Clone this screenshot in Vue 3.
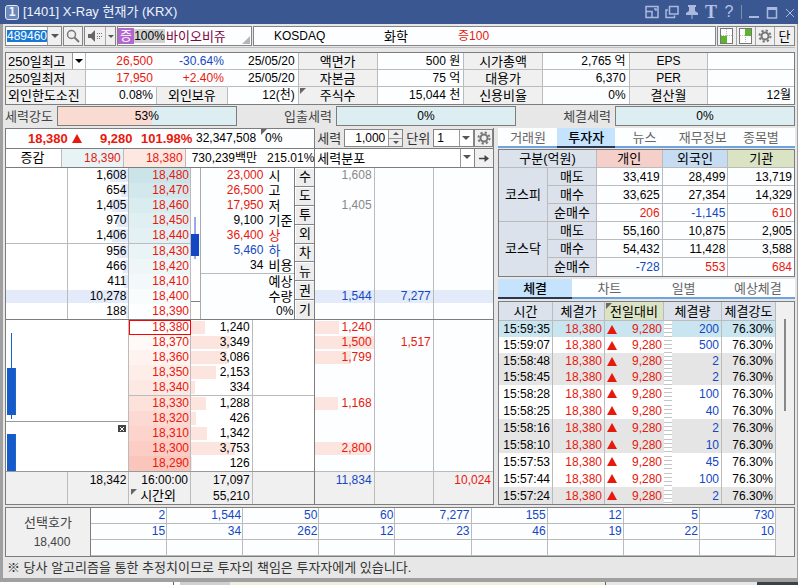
<script setup>
import { ref } from 'vue'

const code = ref('489460')
const forceQty = ref('1,000')
const unit = ref('1')
const mode = ref('세력분포')
const infoTab = ref('투자자')
const dealTab = ref('체결')

const gauges = [
  { label: '세력강도', value: '53%', split: true },
  { label: '입출세력', value: '0%' },
  { label: '체결세력', value: '0%' },
]

const asks = [
  { qty: '1,608', price: '18,480', bg: '#cbe4ea', f1: '1,608' },
  { qty: '654', price: '18,470', bg: '#d2e8ec' },
  { qty: '1,405', price: '18,460', bg: '#d9ecf0', f1: '1,405' },
  { qty: '970', price: '18,450', bg: '#dfeff2' },
  { qty: '1,406', price: '18,440', bg: '#e4f1f4' },
  { qty: '956', price: '18,430', bg: '#e9f4f6' },
  { qty: '466', price: '18,420', bg: '#eef6f8' },
  { qty: '411', price: '18,410', bg: '#f3f9fa' },
  { qty: '10,278', price: '18,400', bg: '#f9fcfd', f1: '1,544', f2: '7,277', picked: true },
  { qty: '188', price: '18,390', bg: '#fdfeff' },
]
const bids = [
  { price: '18,380', qty: '1,240', bg: '#ffffff', f1: '1,240', w: 41, current: true },
  { price: '18,370', qty: '3,349', bg: '#fffaf8', f1: '1,500', f2: '1,517', w: 100 },
  { price: '18,360', qty: '3,086', bg: '#fff3f0', f1: '1,799', w: 61 },
  { price: '18,350', qty: '2,153', bg: '#feeeea', w: 0 },
  { price: '18,340', qty: '334', bg: '#fde9e4', w: 0 },
  { price: '18,330', qty: '1,288', bg: '#fde1db', f1: '1,168', w: 39 },
  { price: '18,320', qty: '426', bg: '#fcdad3', w: 0 },
  { price: '18,310', qty: '1,342', bg: '#fcd4cc', w: 0 },
  { price: '18,300', qty: '3,753', bg: '#fbcdc4', f1: '2,800', w: 95 },
  { price: '18,290', qty: '126', bg: '#fac6bc', w: 0 },
]
const share = (qty) => Math.min(100, Number(qty.replace(',', '')) / 52)
const askShare = (row) => (row.picked ? 0 : share(row.qty))

const stats = [
  ['23,000', '시', 'up'],
  ['26,500', '고', 'up'],
  ['17,950', '저', 'up'],
  ['9,100', '기준', ''],
  ['36,400', '상', 'up same'],
  ['5,460', '하', 'down same'],
  ['34', '비용', ''],
  ['', '예상', ''],
  ['', '수량', ''],
]
const sideKeys = ['수', '도', '투', '외', '차', '뉴', '권', '기']

const infoTabs = ['거래원', '투자자', '뉴스', '재무정보', '종목별']
const dealTabs = ['체결', '차트', '일별', '예상체결']

const investors = [
  { market: '코스피', side: '매도', v: ['33,419', '28,499', '13,719'] },
  { side: '매수', v: ['33,625', '27,354', '14,329'] },
  { side: '순매수', v: ['206', '-1,145', '610'], net: true },
  { market: '코스닥', side: '매도', v: ['55,160', '10,875', '2,905'] },
  { side: '매수', v: ['54,432', '11,428', '3,588'] },
  { side: '순매수', v: ['-728', '553', '684'], net: true },
]
const tone = (v) => (v.startsWith('-') ? 'down' : 'up')

const deals = [
  ['15:59:35', '200', 'new'],
  ['15:59:07', '500', ''],
  ['15:58:48', '2', 'alt'],
  ['15:58:45', '2', 'alt'],
  ['15:58:28', '100', 'tall'],
  ['15:58:25', '40', 'tall'],
  ['15:58:16', '2', 'alt tall'],
  ['15:58:10', '10', 'alt tall'],
  ['15:57:53', '45', 'tall'],
  ['15:57:44', '100', 'tall'],
  ['15:57:24', '2', 'alt tall'],
]
const picks = [
  ['2', '1,544', '50', '60', '7,277', '155', '12', '5', '730'],
  ['15', '34', '262', '12', '23', '46', '19', '22', '10'],
  ['', '', '', '', '', '', '', '', ''],
]
</script>

<template>
  <div class="window">
    <header class="titlebar">
      <span class="badge">1</span>
      <h1>[1401] X-Ray 현재가 (KRX)</h1>
      <div class="win-tools">
        <button type="button" aria-label="크기"><svg width="14" height="14" viewBox="0 0 14 14"><path d="M1 1.5H13V12.5H1ZM1 6.5H7V12.5M9 4H11V6" /></svg></button>
        <button type="button" aria-label="복제"><svg width="14" height="14" viewBox="0 0 14 14"><path d="M4.500 1.500H13V9H4.500ZM3 5H1V12.500H9.500V10.500" /></svg></button>
        <button type="button" aria-label="고정"><svg width="14" height="14" viewBox="0 0 14 14"><path class="fill" d="M3 0H11V2H10V6L13 8V10H1V8L4 6V2H3ZM6.500 10H7.500V14H6.500Z" /></svg></button>
        <button type="button" class="glyph serif">T</button>
        <button type="button" class="glyph">?</button>
        <i class="sep"></i>
        <button type="button" aria-label="최소화"><svg width="12" height="14" viewBox="0 0 12 14"><path class="fill" d="M1 11H11V13H1Z" /></svg></button>
        <button type="button" aria-label="최대화"><svg width="12" height="14" viewBox="0 0 12 14"><path d="M1.500 3H10.500V13H1.500Z" /><path class="fill" d="M1 2H11V5H1Z" /></svg></button>
        <button type="button" aria-label="닫기"><svg width="12" height="14" viewBox="0 0 12 14"><path class="hair" d="M2 4L10 12M10 4L2 12" /></svg></button>
      </div>
    </header>

    <main class="client">
      <div class="toolbar">
        <div class="combo code">
          <input v-model="code" aria-label="종목코드" />
          <button type="button" aria-label="종목 목록"><i class="caret"></i></button>
        </div>
        <button type="button" class="tool" aria-label="검색"><svg width="14" height="14" viewBox="0 0 14 14"><circle cx="5.500" cy="5.500" r="4" fill="none" stroke="#777" stroke-width="1.500" /><path d="M8.500 8.500L13 13" stroke="#777" stroke-width="2" /></svg></button>
        <div class="sound">
          <button type="button" class="tool" aria-label="음성"><svg width="16" height="14" viewBox="0 0 16 14"><path d="M1 5H4L8 1V13L4 9H1Z" fill="#666" /><path d="M10 4.500H15M10 7.500H15" stroke="#777" stroke-dasharray="1 1" /><path d="M10 9.500H13" stroke="#777" stroke-dasharray="1 1" /></svg></button>
          <button type="button" class="tool thin" aria-label="음성 설정"><i class="caret small"></i></button>
        </div>
        <div class="stock">
          <span class="purple">증</span><span class="rate">100%</span><span class="name">바이오비쥬</span>
          <i class="grip"></i>
        </div>
        <div class="market"><span class="m1">KOSDAQ</span><span class="m2">화학</span><span class="m3">증100</span></div>
        <div class="views">
          <button type="button" class="tool" aria-label="왼쪽 배치"><svg width="14" height="16" viewBox="0 0 14 16"><rect x=".5" y=".5" width="12" height="15" fill="#fff" stroke="#777" /><path d="M6.500 1V15M1 7.500H12" stroke="#bbb" stroke-dasharray="1 1" /><path d="M1 8H7V15H1Z" fill="#5cb52c" /></svg></button>
          <button type="button" class="tool" aria-label="오른쪽 배치"><svg width="14" height="16" viewBox="0 0 14 16"><rect x=".5" y=".5" width="12" height="15" fill="#fff" stroke="#777" /><path d="M6.500 1V15M1 7.500H12" stroke="#bbb" stroke-dasharray="1 1" /><path d="M6 1H12V8H6Z" fill="#5cb52c" /></svg></button>
          <button type="button" class="tool" aria-label="설정"><svg width="14" height="14" viewBox="0 0 14 14"><circle cx="7" cy="7" r="3.500" fill="none" stroke="#777" stroke-width="2" /><circle cx="7" cy="7" r="5.500" fill="none" stroke="#777" stroke-width="2" stroke-dasharray="2.200 2.120" /></svg></button>
          <button type="button" class="tool kr">단</button>
        </div>
      </div>

      <table class="grid info">
        <colgroup>
          <col class="i1" /><col class="i2" /><col class="i3" /><col class="i4" /><col class="i5" /><col class="i6" /><col class="i7" /><col class="i8" /><col class="i9" /><col class="i10" />
        </colgroup>
        <tbody>
          <tr>
            <th class="left pick">250일최고<button type="button" aria-label="기간 선택"><i class="caret dark"></i></button></th>
            <td class="up open">26,500</td><td class="down open">-30.64%</td><td>25/05/20</td>
            <th>액면가</th><td>500 원</td><th>시가총액</th><td>2,765 억</td><th class="en">EPS</th><td></td>
          </tr>
          <tr>
            <th class="left">250일최저</th>
            <td class="up open">17,950</td><td class="up open">+2.40%</td><td>25/05/20</td>
            <th>자본금</th><td>75 억</td><th>대용가</th><td>6,370</td><th class="en">PER</th><td></td>
          </tr>
          <tr>
            <th class="left">외인한도소진</th>
            <td>0.08%</td><th>외인보유</th><td>12(천)</td>
            <th class="marked">주식수</th><td>15,044 천</td><th>신용비율</th><td>0%</td><th>결산월</th><td>12월</td>
          </tr>
        </tbody>
      </table>

      <div class="gauges">
        <div v-for="g in gauges" :key="g.label" class="gauge">
          <span>{{ g.label }}</span><b :class="{ split: g.split }">{{ g.value }}</b>
        </div>
      </div>

      <div class="body">
        <section class="book">
          <div class="book-left">
            <div class="now">
              <b class="n1 up">18,380<i class="tri"></i></b><b class="n2 up">9,280</b><b class="n3 up">101.98%</b><span class="n4">32,347,508</span><span class="n5 marked">0%</span>
            </div>
            <div class="now2">
              <span class="kr center">증감</span><span class="up sky">18,390</span><span class="up rose">18,380</span>
              <span class="amount"><em>730,239백만</em><em>215.01%</em></span>
            </div>
            <div class="upper">
              <table class="ladder ask">
                <tbody>
                  <tr v-for="(r, i) in asks" :key="r.price" :class="{ rule: i === 4, picked: r.picked }">
                    <td></td>
                    <td class="qty"><i :style="{ width: askShare(r) + '%' }"></i><span>{{ r.qty }}</span></td>
                    <td class="up price" :style="{ background: r.bg }">{{ r.price }}</td>
                  </tr>
                </tbody>
              </table>
              <svg class="candle-up" viewBox="0 0 10 151" preserveAspectRatio="none"><path d="M4 49H5V91H4ZM0 66H9V88H0Z" fill="#1347c4" /><path d="M0 133H10V134H0Z" fill="#808080" /></svg>
              <div class="stats">
                <p v-for="s in stats" :key="s[1]" :class="[s[2], { line: s[1] === '예상' }]"><span>{{ s[0] }}</span><em>{{ s[1] }}</em></p>
                <p class="pct">0%</p>
              </div>
              <div class="side">
                <button v-for="k in sideKeys" :key="k" type="button">{{ k }}</button>
              </div>
            </div>
            <div class="lower">
              <div class="charts">
                <svg class="c1" viewBox="0 0 123 101" preserveAspectRatio="none"><path d="M5 13H6V99H5ZM1 48H10V95H1Z" fill="#155bc9" /></svg>
                <div class="c2">
                  <svg viewBox="0 0 123 49" preserveAspectRatio="none"><path d="M1 12H10V49H1Z" fill="#155bc9" /></svg>
                  <button type="button" aria-label="차트 닫기"><svg width="8" height="8" viewBox="0 0 8 8"><path d="M2 2L6 6M6 2L2 6" stroke="#fff" /></svg></button>
                </div>
              </div>
              <table class="ladder bid">
                <tbody>
                  <tr v-for="(r, i) in bids" :key="r.price" :class="{ rule: i === 4 }">
                    <td class="up price" :class="{ current: r.current }" :style="{ background: r.bg }">{{ r.price }}</td>
                    <td class="qty"><i :style="{ width: share(r.qty) + '%' }"></i><span>{{ r.qty }}</span></td>
                    <td></td>
                  </tr>
                </tbody>
              </table>
            </div>
            <div class="sum five">
              <span></span><span>18,342</span>
              <span>16:00:00<em class="kr marked">시간외</em></span>
              <span>17,097<em>55,210</em></span><span></span>
            </div>
          </div>

          <div class="book-right">
            <div class="ctl">
              <label for="force">세력</label>
              <div class="spin">
                <input id="force" v-model="forceQty" />
                <div><button type="button" aria-label="증가"><i class="caret small flip"></i></button><button type="button" aria-label="감소"><i class="caret small"></i></button></div>
              </div>
              <label for="unit">단위</label>
              <div class="pickbox unit"><select id="unit" v-model="unit"><option>1</option></select><i class="caret"></i></div>
              <button type="button" class="end" aria-label="설정"><svg width="14" height="14" viewBox="0 0 14 14"><circle cx="7" cy="7" r="3.500" fill="none" stroke="#777" stroke-width="2" /><circle cx="7" cy="7" r="5.500" fill="none" stroke="#777" stroke-width="2" stroke-dasharray="2.200 2.120" /></svg></button>
            </div>
            <div class="ctl second">
              <div class="pickbox"><select v-model="mode" aria-label="표시 항목"><option>세력분포</option></select><i class="caret"></i></div>
              <button type="button" class="end" aria-label="이동"><svg width="12" height="9" viewBox="0 0 12 9"><path d="M1 4.500H9" stroke="#444" stroke-width="1.500" /><path d="M6.500 1L11 4.500L6.500 8Z" fill="#444" /></svg></button>
            </div>
            <table class="ladder dist">
              <tbody>
                <tr v-for="(r, i) in asks" :key="r.price" :class="{ gap: i === 4, picked: r.picked }">
                  <td :class="r.picked ? 'down' : 'mute'">{{ r.f1 }}</td><td class="down">{{ r.f2 }}</td><td></td>
                </tr>
              </tbody>
            </table>
            <table class="ladder dist second">
              <tbody>
                <tr v-for="(r, i) in bids" :key="r.price" :class="{ gap: i === 4 }">
                  <td class="qty up"><i :style="{ width: r.w + '%' }"></i><span>{{ r.f1 }}</span></td><td class="up">{{ r.f2 }}</td><td></td>
                </tr>
              </tbody>
            </table>
            <div class="sum three"><span class="down">11,834</span><span></span><span class="up">10,024</span></div>
          </div>
        </section>

        <section class="panel">
          <nav class="tabs five-tabs">
            <button v-for="t in infoTabs" :key="t" type="button" :class="{ on: t === infoTab }" @click="infoTab = t">{{ t }}</button>
          </nav>
          <table class="grid inv">
            <colgroup><col class="v1" /><col class="v1" /><col /><col /><col /></colgroup>
            <thead>
              <tr><th colspan="2">구분(억원)</th><th class="p">개인</th><th class="f">외국인</th><th class="g">기관</th></tr>
            </thead>
            <tbody>
              <tr v-for="(r, i) in investors" :key="i">
                <th v-if="r.market" rowspan="3" :class="{ last: i === 3 }">{{ r.market }}</th>
                <th>{{ r.side }}</th>
                <td v-for="v in r.v" :key="v" :class="r.net ? tone(v) : ''">{{ v }}</td>
              </tr>
            </tbody>
          </table>
          <nav class="tabs four-tabs">
            <button v-for="t in dealTabs" :key="t" type="button" :class="{ on: t === dealTab }" @click="dealTab = t">{{ t }}</button>
          </nav>
          <div class="dealbox">
            <table class="deals">
              <colgroup><col class="d1" /><col class="d2" /><col class="d3" /><col class="d4" /><col class="d5" /><col class="d6" /></colgroup>
              <thead>
                <tr><th>시간</th><th>체결가</th><th class="g marked">전일대비</th><th colspan="2">체결량</th><th>체결강도</th></tr>
              </thead>
              <tbody>
                <tr v-for="d in deals" :key="d[0]" :class="d[2]">
                  <td>{{ d[0] }}</td><td class="up">18,380</td>
                  <td class="up diff"><div><i class="tri"></i>9,280</div></td>
                  <td class="hatch"></td><td class="down">{{ d[1] }}</td><td>76.30%</td>
                </tr>
              </tbody>
            </table>
            <div class="scroll"><i></i></div>
          </div>
        </section>
      </div>

      <div class="picks">
        <div class="pick-label"><span>선택호가</span><em>18,400</em></div>
        <div class="pick-area">
          <table class="pick-grid">
            <tbody>
              <tr v-for="(row, i) in picks" :key="i"><td v-for="(v, j) in row" :key="j">{{ v }}</td></tr>
            </tbody>
          </table>
        </div>
        <i class="gutter"></i>
      </div>

      <p class="note">※ 당사 알고리즘을 통한 추정치이므로 투자의 책임은 투자자에게 있습니다.</p>
    </main>
    <footer class="behind"><i class="b1"></i><i class="b2"></i><i class="b3"></i><i class="b4"></i><i class="b5"></i></footer>
  </div>
</template>

<style>
body { margin: 0; background: #fff; overflow: hidden; }
</style>

<style scoped>
* { box-sizing: border-box; }
.window { font: 12px/15px "Liberation Sans", "Noto Sans CJK KR", sans-serif; color: #000; }
h1, p { margin: 0; font-weight: 400; }
em { font-style: normal; }
button, input, select { font: inherit; color: inherit; margin: 0; padding: 0; border-radius: 0; }
button { display: flex; align-items: center; justify-content: center; border: 0; background: none; }
.up { color: #e8180c; }
.down { color: #1347c4; }
.mute { color: #888; }
.kr { font-size: 13px; }
.tri { display: inline-block; border: 5px solid transparent; border-top: 0; border-bottom: 9px solid #e8180c; }
.caret { display: block; border: 4px solid transparent; border-top-color: #555; border-bottom: 0; }
.caret.small { border-width: 3px; border-bottom: 0; }
.caret.flip { transform: rotate(180deg); }
.caret.dark { border-top-color: #000; }
.marked { position: relative; }
.marked::before { content: ""; position: absolute; left: 1px; top: 1px; border: 3px solid #666; border-right-color: transparent; border-bottom-color: transparent; }

.titlebar { display: flex; align-items: center; height: 24px; padding: 0 2px 0 5px; background: #3b5791; color: #eef3ff; }
.badge { width: 14px; height: 15px; border: 1px solid #dfe8fa; border-radius: 3px; background: #6f88ba; font: bold 12px/13px "DejaVu Sans Mono", monospace; text-align: center; }
h1 { flex: 1; margin-left: 4px; font-size: 13px; line-height: 20px; }
.win-tools { display: flex; align-items: center; gap: 6px; color: #b4c3e4; }
.win-tools svg { display: block; fill: none; stroke: #a9bade; stroke-width: 1.5; }
.win-tools .fill { fill: #a9bade; stroke: none; }
.win-tools .hair { stroke-width: 1; }
.glyph { width: 12px; font-size: 16px; line-height: 20px; }
.glyph.serif { font-family: "Liberation Serif", serif; font-size: 18px; font-weight: 700; }
.sep { width: 1px; height: 14px; background: #8390ad; }

.client { padding: 2px 3px 0 5px; background: #e7e7e7; border-bottom: 4px solid #a0a0a0; box-shadow: inset 3px 0 #a0a0a0, inset -1px 0 #a0a0a0; }
.toolbar { display: flex; height: 22px; padding-bottom: 1px; border-bottom: 1px solid #bdbdbd; }
.toolbar > * { height: 20px; border: 1px solid #858585; }
.combo { display: flex; width: 57px; background: #fff; }
.combo input { flex: 1; min-width: 0; margin: 3px 0 3px 1px; border: 0; background: #1879d4; color: #fff; line-height: 14px; }
.combo button { width: 14px; border-left: 1px solid #a5a5a5; background: #f0f0f0; }
.tool { width: 20px; background: #f0f0f0; }
.toolbar > .tool { margin-left: 1px; }
.sound { display: flex; margin-left: 1px; }
.sound .thin { width: 10px; border-left: 1px solid #aaa; }
.stock { position: relative; display: flex; align-items: center; flex: none; width: 135px; margin-left: 1px; background: #fdfeff; font-size: 13px; white-space: nowrap; }
.stock span { flex: none; }
.purple { width: 16px; background: #b267cf; color: #fff; text-align: center; line-height: 16px; }
.rate { width: 31px; background: #d0d0d0; font-size: 12px; line-height: 14px; text-align: center; }
.name { margin-left: 1px; color: #800040; }
.grip { position: absolute; right: 1px; bottom: 1px; border: 4px solid #b5b5b5; border-left-color: transparent; border-top-color: transparent; }
.market { display: flex; flex: 1; align-items: center; margin-left: 1px; padding-left: 20px; background: #fdfeff; }
.m1 { width: 110px; }
.m2 { width: 74px; font-size: 13px; }
.m3 { color: #e8180c; }
.toolbar .views { display: flex; margin-left: 1px; }
.views .tool { width: 19px; height: 18px; border-right: 1px solid #a5a5a5; }
.views .tool:last-child { border: 0; }

.grid { width: 100%; table-layout: fixed; border-collapse: separate; border-spacing: 0; border: 1px solid #7d7d7d; }
th { font-weight: 400; font-size: 13px; text-align: center; padding: 0; white-space: nowrap; }
td { text-align: right; padding: 0; white-space: nowrap; }
.info { margin-top: 4px; background: #fdfeff; }
.info th, .info td { height: 17px; border-right: 1px solid #bbb; border-bottom: 1px solid #bbb; line-height: 15px; }
.info td { padding-right: 3px; }
.info th { background: #f0f0f0; }
.info .en { font-size: 12px; }
.info .open { border-right-color: transparent; }
.info tr > :last-child { border-right: 0; }
.info tr:last-child > * { border-bottom: 0; }
.info .left { text-align: left; padding-left: 2px; }
.info .pick { position: relative; }
.pick button { position: absolute; right: 0; top: 0; width: 13px; height: 16px; background: #fff; border-left: 1px solid #999; }
.i1 { width: 80px; }
.i2, .i3 { width: 9%; }
.i4 { width: 9%; }
.i5 { width: 10%; }
.i6 { width: 11%; }
.i7 { width: 10%; }
.i8 { width: 11%; }
.i9 { width: 10%; }

.gauges { display: flex; justify-content: space-between; margin-top: 1px; }
.gauge { display: flex; align-items: center; gap: 4px; color: #444; font-size: 13px; }
.gauge b { width: 180px; height: 20px; border: 1px solid #7d7d7d; background: #dceef2; color: #000; font-size: 12px; font-weight: 400; line-height: 18px; text-align: center; }
.gauge .split { background: linear-gradient(90deg, #fadbd2 53%, #dceef2 53%); }

.body { display: grid; grid-template-columns: 489fr 297fr; gap: 4px; margin-top: 2px; }
.book { display: grid; grid-template-columns: 311fr 178fr; border-right: 1px solid #7d7d7d; }
.book-left { border: 1px solid #7d7d7d; background: #fff; }
.now { display: flex; align-items: center; height: 20px; padding-left: 22px; border-bottom: 1px solid #7d7d7d; line-height: 19px; background: #fdfeff; }
.now b { font-size: 13px; }
.now .tri { margin-left: 4px; }
.n1 { width: 72px; white-space: nowrap; }
.n2 { width: 41px; }
.n3 { width: 55px; }
.n4 { width: 66px; }
.n5 { padding-left: 3px; }
.now .n5::before { top: 0; left: -1px; }
.now2 { display: grid; grid-template-columns: 56fr 62fr 62fr 129fr; height: 19px; border-bottom: 1px solid #7d7d7d; line-height: 18px; text-align: right; }
.now2 > span { border-right: 1px solid #bbb; padding-right: 2px; }
.now2 .center { text-align: center; }
.now2 .sky { background: #e8f3f5; }
.now2 .rose { background: #fde7e1; }
.now2 > .amount { display: flex; justify-content: space-between; border: 0; padding: 0 0 0 6px; white-space: nowrap; }
.ladder { width: 100%; table-layout: fixed; border-collapse: separate; border-spacing: 0; }
.ladder td { height: 15px; line-height: 15px; padding-right: 2px; border-right: 1px solid #bbb; }
.ladder tr { height: 15px; }
.ladder .rule td { height: 16px; border-bottom: 1px solid #bbb; }
.ladder .gap td { height: 16px; }
.ladder .price { padding-right: 1px; }
.ladder .picked td { background: linear-gradient(#e3ebfa 0 0) 0 1px / 100% 13px no-repeat; }
.qty { position: relative; }
.qty span { position: relative; }
.qty i { position: absolute; top: 1px; height: 13px; left: 0; background: #fde5df; }
.ask .qty i { left: auto; right: 0; background: #e3ebfa; }
.upper { display: grid; grid-template-columns: 186fr 10fr 94fr 20fr; border-bottom: 1px solid #7d7d7d; }
.candle-up { display: block; width: 100%; height: 151px; border-right: 1px solid #aaa; }
.stats { background: #fdfeff; }
.stats p { display: flex; height: 15px; }
.stats span { flex: 1; text-align: right; }
.stats em { width: 31px; padding-left: 5px; font-size: 13px; color: #000; }
.stats .same em { color: inherit; }
.stats .line { height: 16px; border-top: 1px solid #bbb; }
.stats .pct { justify-content: flex-end; padding-right: 1px; }
.side { display: grid; grid-template-rows: repeat(8, 1fr); border-left: 1px solid #7d7d7d; }
.side button { border-bottom: 1px solid #858585; background: #ededed; font-size: 13px; box-shadow: inset 1px 1px #fff; }
.side button:last-child { border: 0; }
.lower { display: grid; grid-template-columns: 124fr 186fr; border-bottom: 1px solid #999; }
.charts { border-right: 1px solid #bbb; }
.charts svg { display: block; }
.c1 { width: 100%; height: 101px; }
.c2 { position: relative; border-top: 1px solid #999; }
.c2 > svg { width: 100%; height: 49px; }
.c2 button { position: absolute; right: 2px; top: 3px; width: 8px; height: 7px; background: #444; }
.ladder .current { height: 15px; line-height: 13px; border: 1px solid #f00; padding-right: 1px; }
.bid td:last-child, .dist td:last-child { border-right: 0; }
.sum { display: grid; height: 32px; background: #f0f0f0; text-align: right; line-height: 16px; }
.sum span { border-right: 1px solid #bbb; padding-right: 2px; }
.sum span:last-child { border: 0; }
.sum em { display: block; }
.sum .kr { padding-right: 12px; }
.sum .kr::before { left: 2px; }
.five { grid-template-columns: repeat(5, 1fr); }
.three { grid-template-columns: repeat(3, 1fr); border-bottom: 1px solid #7d7d7d; height: 33px; }

.book-right { background: #fdfeff; }
.ctl { display: flex; align-items: center; height: 20px; gap: 3px; padding-left: 2px; background: #e7e7e7; }
.ctl label { font-size: 13px; color: #333; }
.spin, .pickbox { display: flex; height: 18px; border: 1px solid #858585; background: #fff; }
.spin { width: 59px; }
.spin input { flex: 1; min-width: 0; border: 0; text-align: right; padding-right: 3px; background: transparent; }
.spin div { display: grid; width: 14px; border-left: 1px solid #999; }
.spin button { background: #eee; }
.spin button + button { border-top: 1px solid #999; }
.pickbox { position: relative; flex: 1; min-width: 0; }
.pickbox select { width: 100%; border: 0; padding-left: 3px; background: transparent; appearance: none; font-size: 13px; }
.unit select { font-size: 12px; }
.pickbox .caret { position: absolute; right: 3px; top: 6px; }
.pickbox::after { content: ""; position: absolute; right: 13px; top: 0; bottom: 0; border-left: 1px solid #999; }
.end { width: 19px; height: 18px; border: 1px solid #858585; background: #f0f0f0; }
.ctl .end { margin-left: -3px; }
.ctl.second { padding-left: 0; border-top: 1px solid #7d7d7d; border-bottom: 1px solid #7d7d7d; background: #fff; }
.second .pickbox { height: 18px; border: 0; }
.second select { padding-left: 2px; }
.second .end { border-width: 0 0 0 1px; }
.dist.second { border-top: 1px solid #7d7d7d; border-bottom: 1px solid #bbb; }

.panel { display: flex; flex-direction: column; }
.tabs { display: grid; height: 20px; background: #fdfeff; border-bottom: 2px solid #6fa3e0; }
.tabs button { font-size: 13px; color: #666; height: 20px; padding-bottom: 2px; }
.tabs .on { color: #000; font-weight: 500; background: #c5e3fd; border-bottom: 2px solid #2a3850; padding: 0; }
.five-tabs { grid-template-columns: repeat(5, 1fr); padding: 0 5px 0 1px; }
.four-tabs { grid-template-columns: repeat(4, 1fr); margin-top: 2px; }
.inv { margin-top: 1px; background: #fdfeff; }
.v1 { width: 49px; }
.inv th, .inv td { height: 18px; border-right: 1px solid #bbb; border-bottom: 1px solid #bbb; line-height: 16px; }
.inv td { padding-right: 2px; }
.inv th, .deals th { background: #dbe2ec; }
.inv .p { background: #f5cfc9; }
.inv .f { background: #c6dcf2; }
.inv .g, .deals .g { background: #dbe3c5; }
.inv tr > :last-child { border-right: 0; }
.inv tbody tr:last-child > *, .inv .last { border-bottom: 0; }
.dealbox { display: flex; flex: 1; margin-top: 2px; border: 1px solid #7d7d7d; background: #f0f0f0; }
.deals { flex: 1; table-layout: fixed; border-collapse: separate; border-spacing: 0; background: #fff; }
.deals th { height: 19px; line-height: 17px; border-right: 1px solid #bbb; border-bottom: 1px solid #bbb; }
.deals td { height: 16px; line-height: 16px; padding-right: 2px; border-right: 1px solid #bbb; }
.deals .tall td { height: 17px; }
.deals .alt { background: #e5e5e5; }
.deals .new { background: #c8e5f0; }
.diff div { display: flex; align-items: center; justify-content: space-between; padding-left: 2px; }
.deals .diff { border-right: 0; }
.deals .hatch { border-right: 0; background: repeating-linear-gradient(#fff 0 3px, #c5c5c5 3px 4px); }
.d1 { width: 54px; }
.d2 { width: 52px; }
.d4 { width: 8px; }
.d5 { width: 50px; }
.d6 { width: 54px; }
.scroll { display: flex; width: 18px; padding: 17px 0 0 8px; }
.scroll i { width: 2px; height: 92px; background: #888; }

.picks { display: flex; margin-top: 2px; border: 1px solid #7d7d7d; background: #f0f0f0; }
.pick-label { display: flex; flex-direction: column; align-items: center; justify-content: center; width: 85px; gap: 5px; border-right: 1px solid #7d7d7d; color: #444; font-size: 13px; }
.pick-label em { padding-left: 8px; font-size: 12px; }
.pick-area { flex: 1; }
.pick-grid { width: 100%; table-layout: fixed; border-collapse: separate; border-spacing: 0; background: #fdfeff; }
.pick-grid td { height: 16px; line-height: 15px; padding-right: 1px; color: #1347c4; border-right: 1px solid #bbb; border-bottom: 1px solid #bbb; }
.gutter { width: 18px; }
.note { padding: 0 2px; font-size: 13px; line-height: 21px; color: #333; }
.behind { display: flex; height: 3px; background: #fff; }
.b1 { width: 174px; border-right: 1px solid #666; }
.b2 { width: 56px; background: #d0d0d0; border-left: 6px solid #fff; }
.b3 { flex: 1; background: #f0efdf; }
.b4 { width: 152px; background: #e7e7e7; border-left: 1px solid #666; }
.b5 { width: 41px; background: #3a4148; }
</style>
